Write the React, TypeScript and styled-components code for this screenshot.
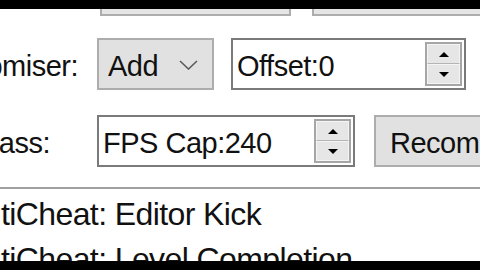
import React from "react";
import styled, { createGlobalStyle } from "styled-components";

const GlobalStyle = createGlobalStyle`
  html, body {
    margin: 0;
    padding: 0;
    background: #ffffff;
    overflow: hidden;
  }
  body {
    font-family: "Liberation Sans", Arial, sans-serif;
    color: #000000;
  }
`;

const Screen = styled.div`
  width: 480px;
  height: 270px;
  display: flex;
  flex-direction: column;
  background: #ffffff;
  overflow: hidden;
`;

const Letterbox = styled.div`
  height: 9px;
  flex: none;
  background: #000000;
`;

const Content = styled.div`
  flex: 1;
  display: flex;
  flex-direction: column;
  overflow: hidden;
`;

const TopRow = styled.div`
  height: 7px;
  flex: none;
  display: flex;
  align-items: flex-end;
  gap: 21px;
  padding-left: 100px;
  overflow: hidden;
`;

const TopButton = styled.div<{ $width: number }>`
  width: ${(p) => p.$width}px;
  height: 40px;
  flex: none;
  box-sizing: border-box;
  background: #e5e5e5;
  border: 2px solid #adadad;
`;

const Form = styled.div`
  display: grid;
  grid-template-columns: 97px 1fr;
  row-gap: 25px;
  margin-top: 22px;
`;

const Label = styled.div<{ $inset: number }>`
  height: 52px;
  display: flex;
  align-items: center;
  justify-content: flex-end;
  padding: 5px ${(p) => p.$inset}px 0 0;
  box-sizing: border-box;
  overflow: hidden;
  white-space: nowrap;
  font-size: 29px;
  letter-spacing: -0.5px;
  color: #111;
`;

const Controls = styled.div<{ $gap: number }>`
  display: flex;
  gap: ${(p) => p.$gap}px;
  white-space: nowrap;
`;

const Combo = styled.div`
  width: 117px;
  height: 52px;
  box-sizing: border-box;
  display: flex;
  align-items: center;
  justify-content: space-between;
  padding: 5px 14px 0 9px;
  background: #e1e1e1;
  border: 2px solid #adadad;
  font-size: 29px;
  letter-spacing: -0.5px;
  color: #111;
`;

const Chevron = styled.svg`
  width: 19px;
  height: 10px;
  margin-top: -4px;
`;

const SpinBox = styled.div<{ $width: number }>`
  width: ${(p) => p.$width}px;
  height: 52px;
  box-sizing: border-box;
  display: flex;
  align-items: center;
  justify-content: space-between;
  padding: 0 2px 0 4px;
  background: #ffffff;
  border: 2px solid #7a7a7a;
  font-size: 29px;
  letter-spacing: -0.5px;
  color: #111;
`;

const SpinText = styled.span`
  padding-top: 5px;
`;

const Spinner = styled.div`
  width: 37px;
  height: 44px;
  box-sizing: border-box;
  display: flex;
  flex-direction: column;
  border: 2px solid #a6a6a6;
  background: #e6e6e6;
`;

const SpinHalf = styled.div<{ $top?: boolean }>`
  flex: 1;
  display: flex;
  align-items: center;
  justify-content: center;
  border: 1px solid #f4f4f4;
  border-bottom: ${(p) => (p.$top ? "1px solid #b4b4b4" : "1px solid #f4f4f4")};
`;

const Arrow = styled.svg`
  width: 10px;
  height: 5px;
`;

const Button = styled.div`
  width: 140px;
  height: 52px;
  flex: none;
  box-sizing: border-box;
  display: flex;
  align-items: center;
  padding: 5px 0 0 14px;
  background: #e1e1e1;
  border: 2px solid #adadad;
  font-size: 29px;
  letter-spacing: -0.5px;
  color: #111;
  overflow: hidden;
`;

const Separator = styled.div`
  height: 2px;
  flex: none;
  margin-top: 20px;
  background: #a0a0a0;
`;

const List = styled.div`
  padding-top: 3px;
`;

const ListItem = styled.div`
  height: 45px;
  line-height: 45px;
  margin-left: -37px;
  white-space: nowrap;
  font-size: 32px;
  letter-spacing: -0.6px;
  color: #111;
`;

function Spin({ up }: { up?: boolean }) {
  return (
    <SpinHalf $top={up}>
      <Arrow viewBox="0 0 10 5">
        {up ? (
          <polygon points="5,0 10,5 0,5" fill="#000" />
        ) : (
          <polygon points="0,0 10,0 5,5" fill="#000" />
        )}
      </Arrow>
    </SpinHalf>
  );
}

function NumberField({ width, text }: { width: number; text: string }) {
  return (
    <SpinBox $width={width}>
      <SpinText>{text}</SpinText>
      <Spinner>
        <Spin up />
        <Spin />
      </Spinner>
    </SpinBox>
  );
}

export default function App() {
  return (
    <Screen>
      <GlobalStyle />
      <Letterbox />
      <Content>
        <TopRow>
          <TopButton $width={191} />
          <TopButton $width={200} />
        </TopRow>
        <Form>
          <Label $inset={19}>Randomiser:</Label>
          <Controls $gap={17}>
            <Combo>
              <span>Add</span>
              <Chevron viewBox="0 0 19 10">
                <polyline
                  points="1,1 9.5,9 18,1"
                  fill="none"
                  stroke="#5a5a5a"
                  strokeWidth="1.6"
                />
              </Chevron>
            </Combo>
            <NumberField width={235} text="Offset:0" />
          </Controls>
          <Label $inset={47}>FPS Bypass:</Label>
          <Controls $gap={19}>
            <NumberField width={258} text="FPS Cap:240" />
            <Button>Recommended</Button>
          </Controls>
        </Form>
        <Separator />
        <List>
          <ListItem>AntiCheat: Editor Kick</ListItem>
          <ListItem>AntiCheat: Level Completion</ListItem>
        </List>
      </Content>
      <Letterbox />
    </Screen>
  );
}
